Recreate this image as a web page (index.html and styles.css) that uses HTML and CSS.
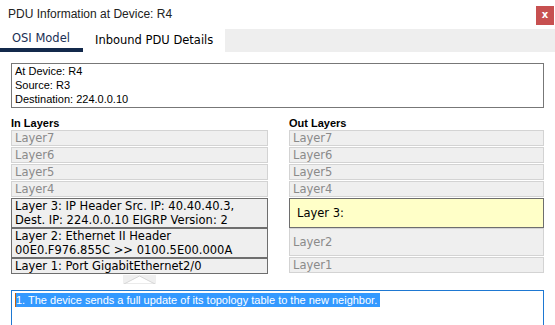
FILE: index.html
```html
<!DOCTYPE html>
<html>
<head>
<meta charset="utf-8">
<link rel="stylesheet" href="styles.css">
</head>
<body>
<div class="window">
  <div class="titlebar">
    <span class="title">PDU Information at Device: R4</span>
    <span class="close">x</span>
  </div>
  <div class="tabs">
    <div class="tab active">OSI Model</div>
    <div class="tab">Inbound PDU Details</div>
    <div class="tab-fill"></div>
  </div>
  <div class="content">
    <div class="info">
      <div>At Device: R4</div>
      <div>Source: R3</div>
      <div>Destination: 224.0.0.10</div>
    </div>
    <div class="columns">
      <div class="col col-in">
        <div class="heading">In Layers</div>
        <div class="row">Layer7</div>
        <div class="row">Layer6</div>
        <div class="row">Layer5</div>
        <div class="row">Layer4</div>
        <div class="row dark tall">Layer 3: IP Header Src. IP: 40.40.40.3,<br>Dest. IP: 224.0.0.10 EIGRP Version: 2</div>
        <div class="row dark tall">Layer 2: Ethernet II Header<br>00E0.F976.855C &gt;&gt; 0100.5E00.000A</div>
        <div class="row dark">Layer 1: Port GigabitEthernet2/0</div>
        <div class="arrow">
          <svg width="33" height="9" viewBox="0 0 33 9">
            <rect x="0" y="0" width="33" height="9" fill="#efefef"/>
            <polygon points="1,9 16.5,1 32,9" fill="#ffffff" stroke="#d6d6d6" stroke-width="1"/>
          </svg>
        </div>
      </div>
      <div class="col col-out">
        <div class="heading">Out Layers</div>
        <div class="row">Layer7</div>
        <div class="row">Layer6</div>
        <div class="row">Layer5</div>
        <div class="row">Layer4</div>
        <div class="row yellow">Layer 3:</div>
        <div class="row mid">Layer2</div>
        <div class="row">Layer1</div>
      </div>
    </div>
    <div class="desc">
      <span class="caret"></span><span class="sel">1. The device sends a full update of its topology table to the new neighbor.</span>
    </div>
  </div>
</div>
</body>
</html>
```
FILE: styles.css
```css
html, body {
  margin: 0;
  padding: 0;
  background: #ffffff;
}
.window {
  width: 555px;
  height: 325px;
  overflow: hidden;
  background: #ffffff;
}
.titlebar {
  height: 29px;
  display: flex;
  align-items: flex-start;
  justify-content: space-between;
  box-sizing: border-box;
  padding: 0 1px 0 8px;
}
.title {
  font-family: "Liberation Sans", Arial, sans-serif;
  font-size: 12px;
  color: #222222;
  line-height: 14px;
  margin-top: 7px;
}
.close {
  width: 18px;
  height: 19px;
  margin-top: 6px;
  background: #c75050;
  color: #ffffff;
  font-family: "DejaVu Sans", sans-serif;
  font-weight: bold;
  font-size: 10px;
  line-height: 18px;
  text-align: center;
}
.tabs {
  height: 23px;
  display: flex;
}
.tab {
  font-family: "DejaVu Sans", sans-serif;
  font-size: 11.5px;
  color: #000000;
  line-height: 22px;
  box-sizing: border-box;
  background: #ffffff;
}
.tab.active {
  width: 83px;
  padding-left: 12px;
  color: #1a2f55;
  border-bottom: 4px solid #13294b;
  line-height: 19px;
}
.tab:not(.active) {
  width: 142px;
  padding-left: 12px;
}
.tab-fill {
  flex: 1;
  background: #eeeeee;
}
.content {
  padding: 11px 11px 0 11px;
}
.info {
  border: 1px solid #777777;
  padding: 0 0 1px 3px;
  font-family: "Liberation Sans", Arial, sans-serif;
  font-size: 11px;
  line-height: 14px;
  color: #000000;
  box-sizing: border-box;
  height: 45px;
}
.columns {
  display: flex;
  gap: 21px;
  margin-top: 8px;
}
.col-in {
  width: 257px;
  display: flex;
  flex-direction: column;
}
.col-out {
  width: 255px;
  display: flex;
  flex-direction: column;
}
.heading {
  font-family: "Liberation Sans", Arial, sans-serif;
  font-weight: bold;
  font-size: 11px;
  line-height: 14px;
  color: #000000;
}
.row {
  box-sizing: border-box;
  height: 16px;
  margin-bottom: 1px;
  border: 1px solid #d3d3d3;
  background: #efefef;
  color: #8a8a8a;
  font-family: "DejaVu Sans", sans-serif;
  font-size: 11.5px;
  letter-spacing: 0;
  line-height: 14px;
  padding-left: 3px;
  white-space: nowrap;
}
.row.dark {
  border-color: #6e6e6e;
  color: #000000;
  margin-bottom: 0;
}
.row.tall {
  height: 30px;
}
.row.yellow {
  height: 30px;
  margin-bottom: 0;
  background: #ffffc8;
  border-color: #6e6e6e;
  color: #000000;
  line-height: 28px;
  padding-left: 7px;
}
.row.mid {
  height: 28px;
  line-height: 26px;
}
.arrow {
  margin-top: 1px;
  height: 9px;
  display: flex;
  justify-content: center;
}
.arrow svg {
  display: block;
}
.desc {
  margin-top: 6px;
  height: 40px;
  border: 1px solid #1e78d2;
  padding: 2px 0 0 3px;
  box-sizing: border-box;
  font-family: "Liberation Sans", Arial, sans-serif;
  font-size: 11px;
  line-height: 14px;
  display: flex;
  align-items: flex-start;
}
.caret {
  width: 1px;
  height: 14px;
  background: #c06010;
}
.sel {
  background: #3399ff;
  color: #ffffff;
  padding-right: 3px;
}
```
